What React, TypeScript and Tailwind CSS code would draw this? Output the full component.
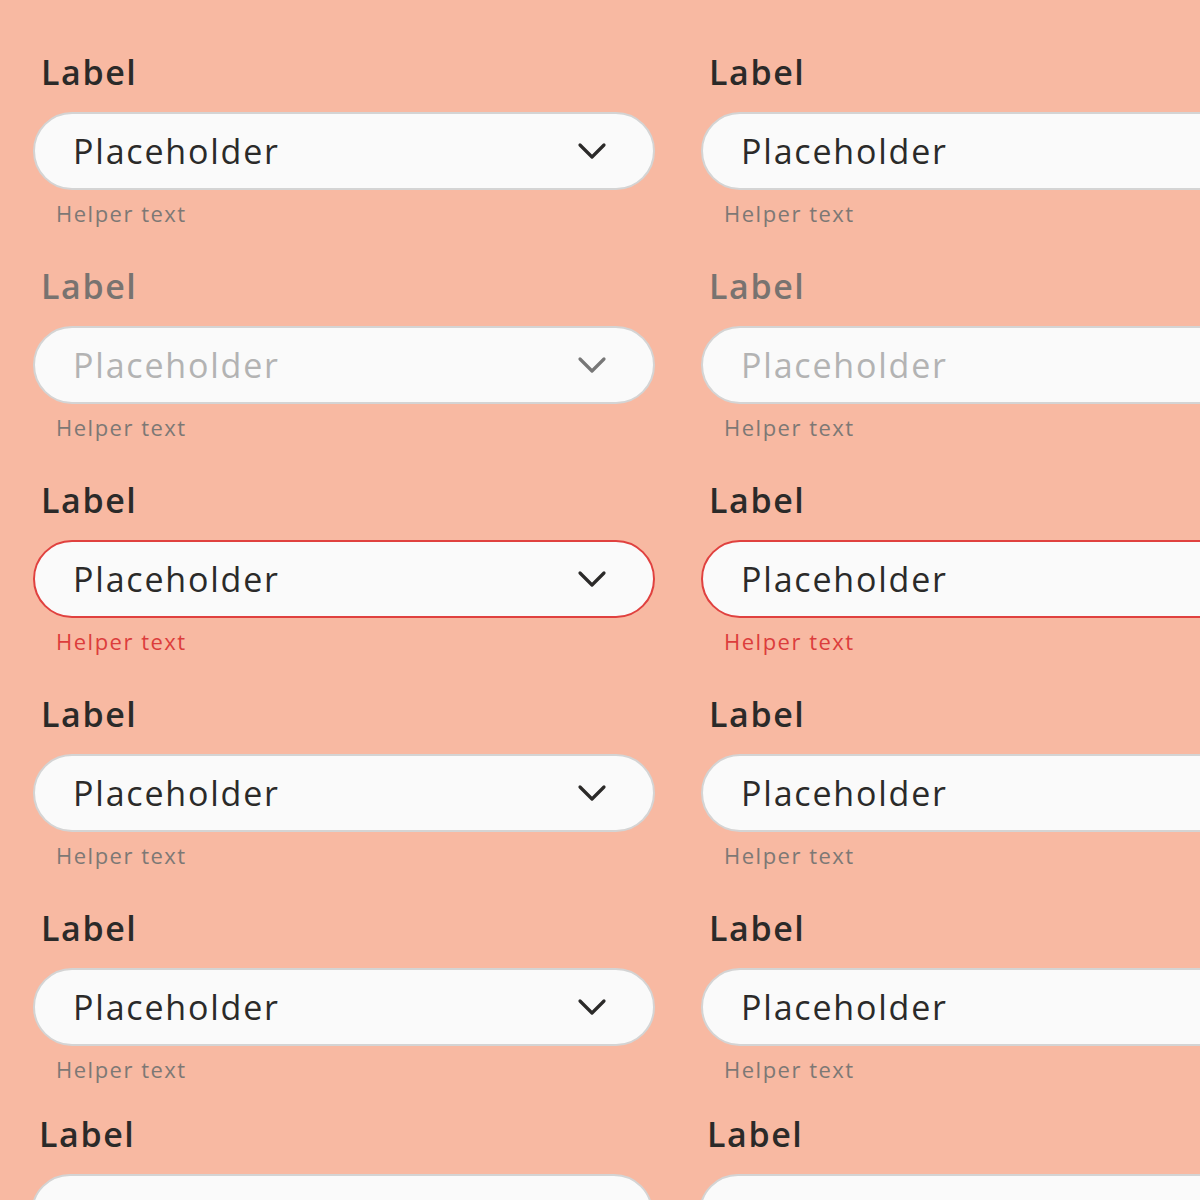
import React from "react";

type Variant = "default" | "disabled" | "error";

function Chevron({ color }: { color: string }) {
  return (
    <svg width="30" height="20" viewBox="0 0 30 20" fill="none" className="shrink-0">
      <path d="M3 4 L15 16 L27 4" stroke={color} strokeWidth="3.2" strokeLinecap="round" strokeLinejoin="round" />
    </svg>
  );
}

function Field({ variant, chevron, extra }: { variant: Variant; chevron: boolean; extra?: string }) {
  const labelColor = variant === "disabled" ? "text-[#787370]" : "text-[#2b2a29]";
  const border = variant === "error" ? "border-[#e0413f]" : "border-[#d4d4d4]";
  const ph = variant === "disabled" ? "text-[#b3b3b3]" : "text-[#2b2a29]";
  const helper = variant === "error" ? "text-[#dc3d3c]" : "text-[#7d7875]";
  return (
    <div className={"flex flex-col " + (extra ?? "")}>
      <div className={"pl-[8px] h-[40px] flex items-center text-[34px] font-semibold tracking-[1.6px] " + labelColor}>
        Label
      </div>
      <div
        className={
          "mt-[20px] h-[78px] w-[622px] rounded-full border-2 bg-[#fafafa] flex items-center pl-[38px] pr-[46px] " + border
        }
      >
        <span className={"flex-1 text-[34px] tracking-[1.8px] " + ph}>Placeholder</span>
        {chevron && <Chevron color={variant === "disabled" ? "#777777" : "#2b2a29"} />}
      </div>
      <div className={"mt-[9px] h-[28px] pl-[23px] flex items-center text-[22px] tracking-[1.5px] " + helper}>
        Helper text
      </div>
    </div>
  );
}

export default function App() {
  const variants: Variant[] = ["default", "disabled", "error", "default", "default", "default"];
  return (
    <div
      className="w-[1200px] h-[1200px] overflow-hidden bg-[#f8b9a2]"
      style={{ fontFamily: '"Open Sans", "Noto Sans", sans-serif' }}
    >
      <div className="pl-[33px] pt-[52px] flex gap-[46px]">
        {[true, false].map((chev, ci) => (
          <div key={ci} className="flex flex-col gap-[39px] shrink-0">
            {variants.map((v, i) => (
              <Field key={i} variant={v} chevron={chev} extra={i === 5 ? "-mt-[8px] ml-[-2px]" : ""} />
            ))}
          </div>
        ))}
      </div>
    </div>
  );
}
